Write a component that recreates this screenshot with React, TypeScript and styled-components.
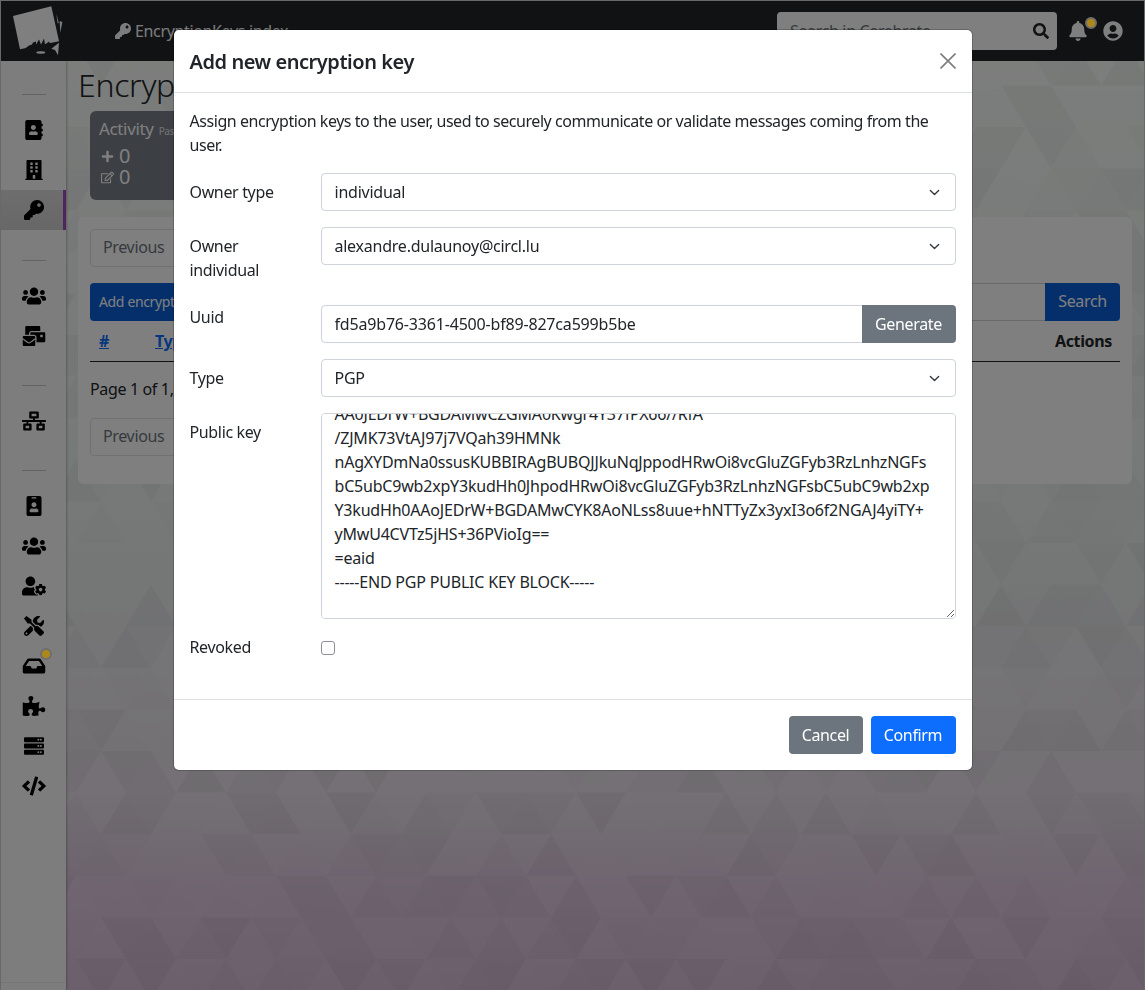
import React, { useLayoutEffect, useMemo, useRef } from "react";
import styled, { createGlobalStyle } from "styled-components";
import {
  FaAddressBook, FaBuilding, FaKey, FaUsers, FaMailBulk, FaNetworkWired, FaIdBadge, FaUserCog,
  FaTools, FaInbox, FaPuzzlePiece, FaServer, FaCode, FaSearch, FaBell, FaUserCircle, FaPlus, FaRegEdit,
} from "react-icons/fa";

const FONT = `"Noto Sans", "Liberation Sans", sans-serif`;

const Global = createGlobalStyle`
  html, body { margin: 0; padding: 0; height: 990px; overflow: hidden; background: #cfd0cf; }
  * { box-sizing: border-box; }
  body { font-family: ${FONT}; font-size: 16px; line-height: 24px; color: #212529; letter-spacing: -0.35px; }
`;

const Page = styled.div`
  position: relative;
  height: 989px;
  margin: 1px 1px 0 1px;
  display: flex;
  flex-direction: column;
  overflow: hidden;
`;

const Pattern = styled.svg`
  position: absolute;
  inset: 0;
  width: 100%;
  height: 100%;
`;

const Header = styled.header`
  position: relative;
  flex: 0 0 60px;
  height: 60px;
  background: #212529;
  display: flex;
  align-items: center;
  padding: 0 21px 0 11px;
`;

const Logo = styled.svg`
  width: 52px;
  height: 52px;
  flex: none;
`;

const Crumb = styled.div`
  margin-left: 51px;
  display: flex;
  align-items: center;
  gap: 4px;
  color: #f8f9fa;
  font-size: 16px;
  svg { width: 16px; height: 16px; }
`;

const HeaderRight = styled.div`
  margin-left: auto;
  display: flex;
  align-items: center;
`;

const SearchBox = styled.div`
  width: 280px;
  height: 38px;
  background: #fff;
  border-radius: 4px;
  display: flex;
  align-items: center;
  justify-content: space-between;
  padding: 0 8px 0 13px;
  color: #6c757d;
  svg { width: 16px; height: 16px; color: #212529; }
`;

const IconSlot = styled.div`
  position: relative;
  margin-left: ${(p: { $ml: number }) => p.$ml}px;
  display: flex;
  color: #fff;
  svg { width: 20px; height: 20px; display: block; }
`;

const Dot = styled.span`
  position: absolute;
  z-index: 20;
  width: 12px;
  height: 12px;
  top: -4px;
  right: -9px;
  border-radius: 50%;
  background: #ac871b;
  border: 2px solid #6e6e6e;
`;

const Body = styled.div`
  position: relative;
  flex: 1;
  display: flex;
  min-height: 0;
`;

const Sidebar = styled.nav`
  flex: 0 0 65px;
  width: 65px;
  background: #fafafa;
  box-shadow: 1px 0 2px rgba(0, 0, 0, 0.25);
  display: flex;
  flex-direction: column;
  padding-top: 33px;
  position: relative;
`;

const SideRule = styled.hr`
  width: 24px;
  height: 1px;
  border: 0;
  background: #c4c4c4;
  margin: ${(p: { $top: number; $bottom: number }) => `${p.$top}px auto ${p.$bottom}px`};
  flex: none;
`;

const SideItem = styled.div<{ $active?: boolean }>`
  height: 40px;
  flex: none;
  display: flex;
  align-items: center;
  justify-content: center;
  color: #000;
  position: relative;
  padding-left: ${(p) => (p.$active ? "3px" : "0")};
  background: ${(p) => (p.$active ? "linear-gradient(#dcdcdc, #cfcfcf)" : "transparent")};
  border-right: ${(p) => (p.$active ? "3px solid #a04bbf" : "0")};
  svg { width: 24px; height: 20px; display: block; }
`;

const SideDot = styled(Dot)`
  top: 2px;
  right: 14px;
`;

const SideFoot = styled.div`
  margin-top: auto;
  height: 8px;
  border-top: 1px solid #ececec;
`;

const Main = styled.main`
  position: relative;
  flex: 1;
  min-width: 0;
  padding: 1px 12px 0 12px;
`;

const Title = styled.h2`
  margin: 0 0 3px 0;
  font-size: 32px;
  line-height: 46px;
  font-weight: 300;
  letter-spacing: -0.3px;
  color: #212529;
`;

const ActivityCard = styled.div`
  margin-left: 12px;
  width: 260px;
  height: 89px;
  border-radius: 6px;
  background: #787e87;
  color: #fff;
  padding: 6px 9px;
  font-size: 17px;
`;

const ActivityHead = styled.div`
  line-height: 24px;
  small { font-size: 10px; margin-left: 1px; opacity: 0.8; }
`;

const Stat = styled.div`
  display: flex;
  align-items: center;
  gap: 5px;
  font-size: 20px;
  line-height: 20px;
  margin: ${(p: { $mt: number }) => p.$mt}px 0 0 2px;
  svg { width: 13px; height: 13px; }
`;

const Card = styled.section`
  margin-top: 17px;
  height: 267px;
  background: #fff;
  border-radius: 6px;
  padding: 12px;
`;

const PageButton = styled.div`
  width: 120px;
  height: 38px;
  border: 1px solid #dee2e6;
  border-radius: 4px;
  padding: 5px 12px;
  color: #6c757d;
`;

const Toolbar = styled.div`
  margin-top: 16px;
  height: 38px;
  display: flex;
  justify-content: space-between;
`;

const AddButton = styled.div`
  height: 38px;
  padding: 7px 9px;
  background: #0b5ed7;
  border-radius: 4px;
  color: #fff;
  font-size: 14px;
`;

const SearchGroup = styled.div`
  display: flex;
  width: 500px;
`;

const SearchInput = styled.div`
  flex: 1;
  border: 1px solid #ced4da;
  border-right: 0;
`;

const SearchBtn = styled.div`
  width: 75px;
  background: #0b5ed7;
  color: #fff;
  border-radius: 0 4px 4px 0;
  text-align: center;
  line-height: 36px;
`;

const TableHead = styled.div`
  height: 41px;
  padding: 8px 8px 0 9px;
  display: flex;
  font-weight: 700;
  border-bottom: 1px solid #212529;
  a { color: #0d6efd; text-decoration: underline; width: 56px; }
`;

const ActionsHead = styled.span`
  margin-left: auto;
`;

const PageInfo = styled.div`
  margin: 15px 0 17px;
  line-height: 24px;
`;

const Layer = styled.div`
  position: fixed;
  inset: 0;
  z-index: 10;
  background: rgba(0, 0, 0, 0.5);
  display: flex;
  justify-content: center;
  align-items: flex-start;
  padding-top: 30px;
`;

const Modal = styled.div`
  width: 798px;
  background: #fff;
  border-radius: 5px;
  box-shadow: 0 0 0 1px rgba(0, 0, 0, 0.2);
`;

const ModalHead = styled.div`
  height: 63px;
  border-bottom: 1px solid #dee2e6;
  display: flex;
  align-items: center;
  justify-content: space-between;
  padding: 0 16px;
  h5 { margin: 2px 0 0; font-size: 20px; font-weight: 600; line-height: 30px; letter-spacing: -0.45px; }
`;

const Close = styled.button`
  border: 0;
  background: none;
  padding: 0;
  width: 16px;
  height: 16px;
  display: block;
  svg { display: block; }
`;

const ModalBody = styled.div`
  padding: 16px;
`;

const Intro = styled.p`
  margin: 0 0 16px;
  letter-spacing: -0.45px;
`;

const Row = styled.div`
  display: grid;
  grid-template-columns: 131px 635px;
  margin-bottom: ${(p: { $mb?: number }) => p.$mb ?? 16}px;
`;

const Label = styled.label`
  padding: ${(p: { $flat?: boolean }) => (p.$flat ? "0" : "7px 0")};
  line-height: 24px;
`;

const fieldCss = `
  display: block;
  width: 100%;
  font: inherit;
  color: #212529;
  border: 1px solid #ced4da;
  background-color: #fff;
  outline: none;
`;

const chevron = `url("data:image/svg+xml,%3csvg xmlns='http://www.w3.org/2000/svg' viewBox='0 0 16 16'%3e%3cpath fill='none' stroke='%23343a40' stroke-linecap='round' stroke-linejoin='round' stroke-width='2' d='M2 5l6 6 6-6'/%3e%3c/svg%3e")`;

const Select = styled.select`
  ${fieldCss}
  letter-spacing: -0.24px;
  height: 38px;
  padding: 6px 36px 6px 13px;
  border-radius: 4px;
  appearance: none;
  background-image: ${chevron};
  background-repeat: no-repeat;
  background-position: right 14px center;
  background-size: 13px 11px;
`;

const InputGroup = styled.div`
  display: flex;
`;

const Input = styled.input`
  ${fieldCss}
  letter-spacing: -0.18px;
  flex: 1;
  height: 38px;
  min-width: 0;
  padding: 6px 13px;
  border-radius: 4px 0 0 4px;
`;

const Btn = styled.button<{ $tone: "grey" | "blue"; $w: number }>`
  width: ${(p) => p.$w}px;
  height: 38px;
  border: 0;
  padding: 0;
  font: inherit;
  letter-spacing: inherit;
  color: #fff;
  background: ${(p) => (p.$tone === "grey" ? "#6c757d" : "#0d6efd")};
  border-radius: 4px;
`;

const GenerateBtn = styled(Btn)`
  border-radius: 0 4px 4px 0;
  margin-left: -1px;
`;

const Area = styled.textarea`
  ${fieldCss}
  letter-spacing: -0.2px;
  height: 206px;
  padding: 6px 13px;
  border-radius: 4px;
  resize: vertical;
  white-space: pre;
  overflow: auto;
  scrollbar-width: none;
  line-height: 24px;
`;

const Check = styled.input`
  appearance: none;
  width: 14px;
  height: 14px;
  margin: 6px 0 0;
  border: 1.5px solid #8d8d9a;
  border-radius: 3px;
  background: #fff;
  display: block;
`;

const ModalFoot = styled.div`
  height: 71px;
  border-top: 1px solid #dee2e6;
  display: flex;
  justify-content: flex-end;
  align-items: center;
  gap: 8px;
  padding: 0 16px;
`;

const KEY = `-----BEGIN PGP PUBLIC KEY BLOCK-----
nAgXYDmNa0ssusKUBBIRAgBUBQJJkuNqJppodHRw
Oi8vcGluZGFyb3RzLnhzNGFsbC5ubC9wb2xpY3kudHh0
AA0JEDrW+BGDAMwCZGMA0Kwgr4Y37fPX66//RfA
/ZJMK73VtAJ97j7VQah39HMNk
nAgXYDmNa0ssusKUBBIRAgBUBQJJkuNqJppodHRwOi8vcGluZGFyb3RzLnhzNGFs
bC5ubC9wb2xpY3kudHh0JhpodHRwOi8vcGluZGFyb3RzLnhzNGFsbC5ubC9wb2xp
Y3kudHh0AAoJEDrW+BGDAMwCYK8AoNLss8uue+hNTTyZx3yxI3o6f2NGAJ4yiTY+
yMwU4CVTz5jHS+36PVioIg==
=eaid
-----END PGP PUBLIC KEY BLOCK-----
`;

function useTriangles() {
  return useMemo(() => {
    let seed = 1337;
    const rnd = () => {
      seed = (seed * 16807) % 2147483647;
      return seed / 2147483647;
    };
    const h = 41.6;
    const out: { points: string; fill: string; opacity: number }[] = [];
    for (let row = -18; row < 7; row++) {
      const top = 750 + row * h;
      const xoff = (row & 1) === 0 ? 100 : 75;
      for (let i = -3; i < 24; i++) {
        const ax = xoff + i * 50;
        const pick = () => ({
          fill: rnd() > 0.5 ? "#fff" : "#000",
          opacity: 0.008 + rnd() * 0.032,
        });
        out.push({ points: `${ax},${top} ${ax - 25},${top + h} ${ax + 25},${top + h}`, ...pick() });
        out.push({ points: `${ax},${top} ${ax + 50},${top} ${ax + 25},${top + h}`, ...pick() });
      }
    }
    return out;
  }, []);
}

const SIDE_TOP = [FaAddressBook, FaBuilding, FaKey];
const SIDE_B = [FaUsers, FaMailBulk];
const SIDE_D = [FaIdBadge, FaUsers, FaUserCog, FaTools, FaInbox, FaPuzzlePiece, FaServer, FaCode];

export default function App() {
  const tris = useTriangles();
  const area = useRef<HTMLTextAreaElement>(null);
  useLayoutEffect(() => {
    if (area.current) area.current.scrollTop = 90;
  }, []);

  return (
    <>
      <Global />
      <Page>
        <Pattern aria-hidden="true">
          <defs>
            <linearGradient id="bg" x1="0" y1="0" x2="0" y2="1">
              <stop offset="0" stopColor="#fafdfa" />
              <stop offset="0.5" stopColor="#ecf3ef" />
              <stop offset="0.8" stopColor="#e8e0ea" />
              <stop offset="0.9" stopColor="#dec8e0" />
              <stop offset="1" stopColor="#d6bed8" />
            </linearGradient>
          </defs>
          <rect width="100%" height="100%" fill="url(#bg)" />
          {tris.map((t, i) => (
            <polygon key={i} points={t.points} fill={t.fill} fillOpacity={t.opacity} />
          ))}
        </Pattern>

        <Header>
          <Logo viewBox="12 5 52 52">
            <path d="M56.300 13.700l2.400 9 -1 1z" fill="#fff" />
            <path d="M59.700 21l2.600 1-2 10.700z" fill="#fff" />
            <path d="M13 16L51.300 6.300 59 41.300 20 49.300z" fill="#fff" />
            <path
              d="M25 48.500l4-3 3-1 1-2 3-1 0 3 3-5 2 5 3-6 1 6 4-3 2 4 4-1-2 5-14 1z"
              fill="#212529"
            />
            <path d="M51.300 48.700L59 42.700 58 55.300 55 50z" fill="#fff" />
            <ellipse cx="40.800" cy="52.500" rx="4.500" ry="1.200" fill="#fff" />
          </Logo>
          <Crumb>
            <FaKey />
            <span>EncryptionKeys index</span>
          </Crumb>
          <HeaderRight>
            <SearchBox>
              <span>Search in Cerebrate</span>
              <FaSearch />
            </SearchBox>
            <IconSlot $ml={11}>
              <FaBell />
              <Dot />
            </IconSlot>
            <IconSlot $ml={15}>
              <FaUserCircle />
            </IconSlot>
          </HeaderRight>
        </Header>

        <Body>
          <Sidebar>
            <SideRule $top={0} $bottom={15} />
            {SIDE_TOP.map((I, i) => (
              <SideItem key={i} $active={i === 2}>
                <I />
              </SideItem>
            ))}
            <SideRule $top={30} $bottom={15} />
            {SIDE_B.map((I, i) => (
              <SideItem key={i}>
                <I />
              </SideItem>
            ))}
            <SideRule $top={29} $bottom={15} />
            <SideItem>
              <FaNetworkWired />
            </SideItem>
            <SideRule $top={29} $bottom={15} />
            {SIDE_D.map((I, i) => (
              <SideItem key={i}>
                <I />
                {i === 4 && <SideDot />}
              </SideItem>
            ))}
            <SideFoot />
          </Sidebar>

          <Main>
            <Title>Encryption Keys</Title>
            <ActivityCard>
              <ActivityHead>
                Activity <small>Past 7 days</small>
              </ActivityHead>
              <Stat $mt={3}>
                <FaPlus />0
              </Stat>
              <Stat $mt={1}>
                <FaRegEdit />0
              </Stat>
            </ActivityCard>
            <Card>
              <PageButton>Previous</PageButton>
              <Toolbar>
                <AddButton>Add encryption key</AddButton>
                <SearchGroup>
                  <SearchInput />
                  <SearchBtn>Search</SearchBtn>
                </SearchGroup>
              </Toolbar>
              <TableHead>
                <a>#</a>
                <a>Type</a>
                <ActionsHead>Actions</ActionsHead>
              </TableHead>
              <PageInfo>Page 1 of 1, showing 0 records</PageInfo>
              <PageButton>Previous</PageButton>
            </Card>
          </Main>
        </Body>

        <Layer>
          <Modal>
            <ModalHead>
              <h5>Add new encryption key</h5>
              <Close aria-label="Close">
                <svg width="16" height="16" viewBox="0 0 16 16">
                  <path d="M.5.5l15 15M15.500.5l-15 15" stroke="#7d7d7d" strokeWidth="1.6" fill="none" />
                </svg>
              </Close>
            </ModalHead>
            <ModalBody>
              <Intro>
                Assign encryption keys to the user, used to securely communicate or validate messages coming from the
                user.
              </Intro>
              <Row>
                <Label>Owner type</Label>
                <Select defaultValue="individual">
                  <option>individual</option>
                  <option>organisation</option>
                </Select>
              </Row>
              <Row>
                <Label>
                  Owner
                  <br />
                  individual
                </Label>
                <Select defaultValue="alexandre.dulaunoy@circl.lu">
                  <option>alexandre.dulaunoy@circl.lu</option>
                </Select>
              </Row>
              <Row>
                <Label $flat>Uuid</Label>
                <InputGroup>
                  <Input defaultValue="fd5a9b76-3361-4500-bf89-827ca599b5be" />
                  <GenerateBtn $tone="grey" $w={94}>
                    Generate
                  </GenerateBtn>
                </InputGroup>
              </Row>
              <Row>
                <Label>Type</Label>
                <Select defaultValue="PGP">
                  <option>PGP</option>
                  <option>S/MIME</option>
                </Select>
              </Row>
              <Row>
                <Label>Public key</Label>
                <Area ref={area} defaultValue={KEY} spellCheck={false} />
              </Row>
              <Row $mb={24}>
                <Label $flat>Revoked</Label>
                <Check type="checkbox" />
              </Row>
            </ModalBody>
            <ModalFoot>
              <Btn $tone="grey" $w={74}>
                Cancel
              </Btn>
              <Btn $tone="blue" $w={85}>
                Confirm
              </Btn>
            </ModalFoot>
          </Modal>
        </Layer>
      </Page>
    </>
  );
}
